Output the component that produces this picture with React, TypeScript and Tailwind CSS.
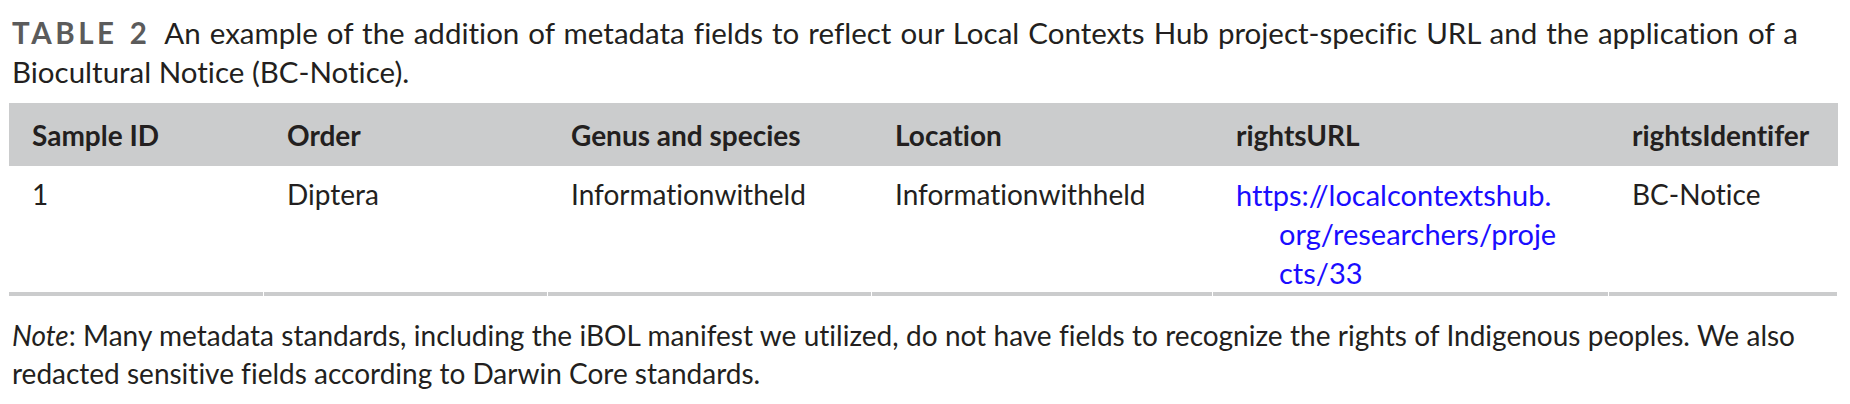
import React from "react";

const cols = "grid grid-cols-[255px_284px_324px_341px_396px_229px]";

const headers = ["Sample ID", "Order", "Genus and species", "Location", "rightsURL", "rightsIdentifer"];

const cell = "pl-[23px] pt-[8px] mr-[1px] border-b-4 border-[#cbcccd]";

const App: React.FunctionComponent = () => {
    return (
        <div className="w-[1850px] h-[404px] bg-white text-[#231f20] font-['Lato',_'Liberation_Sans',_sans-serif] text-[28px] leading-[39px] pt-[13px] pl-[12px] [font-variant-ligatures:none]">
            {/* caption */}
            <p className="w-[1786px] text-[29.5px] text-justify">
                <span className="font-bold tracking-[0.12em] text-[#5b5b5b] mr-[14px]">TABLE 2</span>
                An example of the addition of metadata fields to reflect our Local Contexts Hub project-specific URL and the application of a Biocultural Notice (BC-Notice).
            </p>

            <div className="ml-[-3px] mt-[12px] w-[1829px]">
                <div className={`${cols} bg-[#cbcccd] font-bold pt-[13px] pb-[11px]`}>
                    {headers.map((h) => (
                        <div key={h} className="pl-[23px]">{h}</div>
                    ))}
                </div>
                <div className={`${cols} mt-[1px]`}>
                    <div className={cell}>1</div>
                    <div className={cell}>Diptera</div>
                    <div className={cell}>Informationwitheld</div>
                    <div className={cell}>Informationwithheld</div>
                    <div className={`${cell} text-[#1a0dff] text-[29px]`}>
                        <div>https://localcontextshub.</div>
                        <div className="pl-[43px]">org/researchers/proje</div>
                        <div className="pl-[43px]">cts/33</div>
                    </div>
                    <div className={cell}>BC-Notice</div>
                </div>
            </div>

            {/* note */}
            <p className="w-[1783px] mt-[20px] leading-[38px] text-justify">
                <i>Note</i>: Many metadata standards, including the iBOL manifest we utilized, do not have fields to recognize the rights of Indigenous peoples. We also redacted sensitive fields according to Darwin Core standards.
            </p>
        </div>
    );
};

export default App;
